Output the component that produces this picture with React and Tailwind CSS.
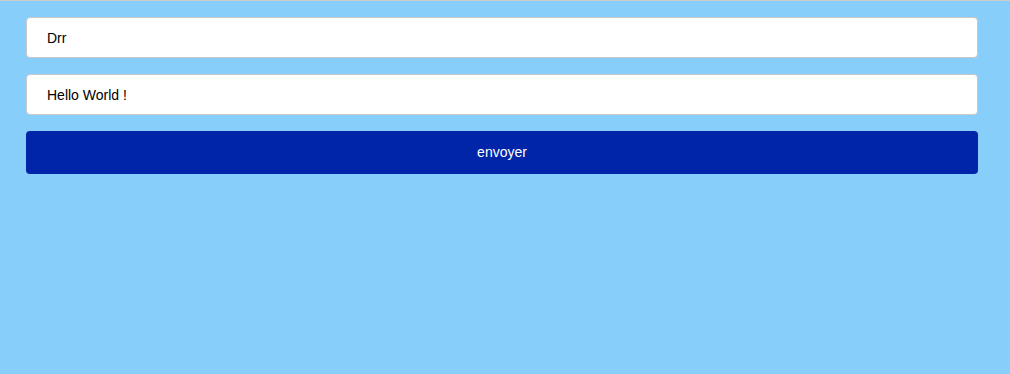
import React from 'react';

const App = () => {
  return (
    <div
      className="min-h-[374px] w-full bg-[#87cefa] border-t border-[#cccccc] pt-4"
      style={{ fontFamily: '"Liberation Sans", Arial, sans-serif' }}
    >
      <div className="ml-[26px] w-[952px] flex flex-col gap-4">
        <input
          type="text"
          defaultValue="Drr"
          className="h-[41px] w-full bg-white border border-[#c8c8c8] rounded-[4px] pl-5 text-[14px] text-black outline-none"
        />
        <input
          type="text"
          defaultValue="Hello World !"
          className="h-[41px] w-full bg-white border border-[#c8c8c8] rounded-[4px] pl-5 text-[14px] text-black outline-none"
        />
        <button
          type="button"
          className="h-[43px] w-full bg-[#0025a8] rounded-[4px] text-white text-[14px]"
        >
          envoyer
        </button>
      </div>
    </div>
  );
};

export default App;
